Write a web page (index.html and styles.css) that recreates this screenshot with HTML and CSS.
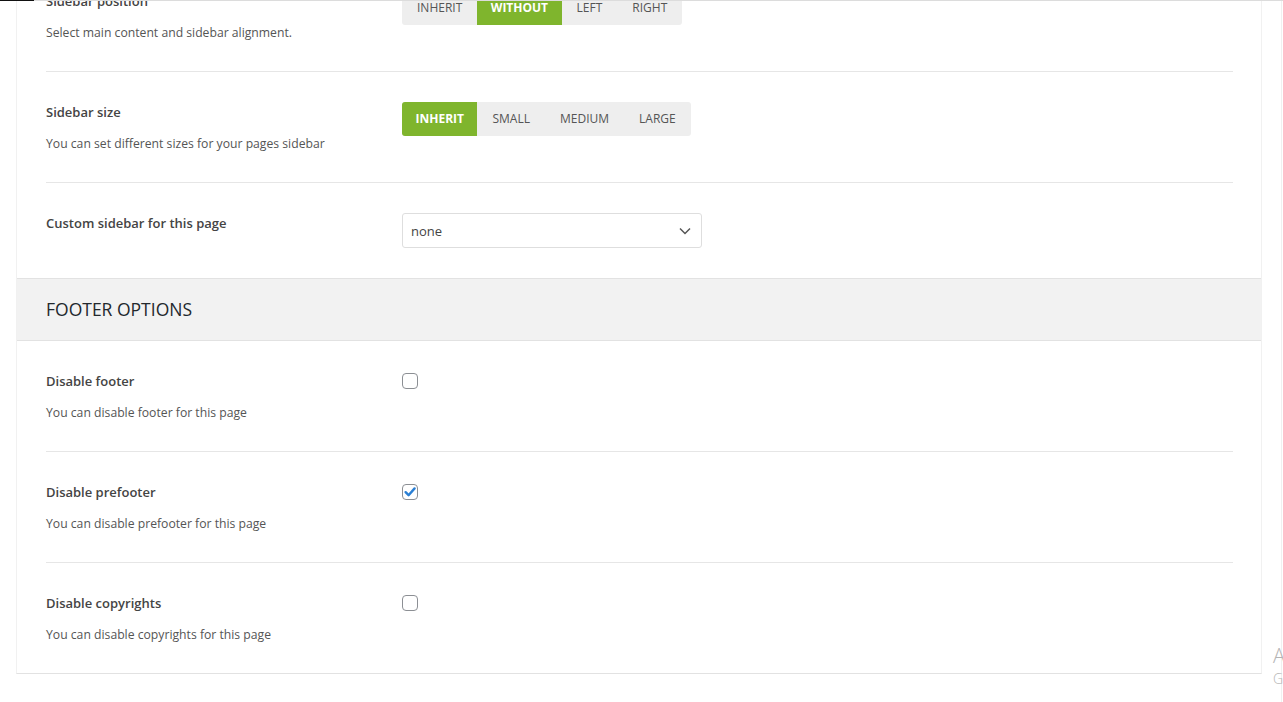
FILE: index.html
```html
<!DOCTYPE html>
<html lang="en">
<head>
<meta charset="utf-8">
<title>Page options</title>
<link rel="stylesheet" href="styles.css">
</head>
<body>
<div class="topbar"><span class="topbar-dark"></span></div>
<div class="page">
  <div class="panel">
    <div class="row first">
      <div class="label">
        <div class="title">Sidebar position</div>
        <div class="desc">Select main content and sidebar alignment.</div>
      </div>
      <div class="control">
        <div class="btn-group">
          <span class="seg">INHERIT</span>
          <span class="seg active">WITHOUT</span>
          <span class="seg">LEFT</span>
          <span class="seg">RIGHT</span>
        </div>
      </div>
    </div>
    <div class="row">
      <div class="label">
        <div class="title">Sidebar size</div>
        <div class="desc">You can set different sizes for your pages sidebar</div>
      </div>
      <div class="control">
        <div class="btn-group">
          <span class="seg active">INHERIT</span>
          <span class="seg">SMALL</span>
          <span class="seg">MEDIUM</span>
          <span class="seg">LARGE</span>
        </div>
      </div>
    </div>
    <div class="row no-border short">
      <div class="label">
        <div class="title">Custom sidebar for this page</div>
      </div>
      <div class="control">
        <div class="select">
          <span>none</span>
          <svg class="chev" width="12" height="8" viewBox="0 0 12 8"><path d="M1 1.5 L6 6.5 L11 1.5" fill="none" stroke="#555" stroke-width="1.5"/></svg>
        </div>
      </div>
    </div>
    <div class="section-head">FOOTER OPTIONS</div>
    <div class="row">
      <div class="label">
        <div class="title">Disable footer</div>
        <div class="desc">You can disable footer for this page</div>
      </div>
      <div class="control"><span class="checkbox"></span></div>
    </div>
    <div class="row">
      <div class="label">
        <div class="title">Disable prefooter</div>
        <div class="desc">You can disable prefooter for this page</div>
      </div>
      <div class="control"><span class="checkbox"><svg width="14" height="14" viewBox="0 0 14 14"><path d="M2.6 7.2 L5.6 10.2 L11.6 3.4" fill="none" stroke="#2a7fd4" stroke-width="2.4" stroke-linecap="round" stroke-linejoin="round"/></svg></span></div>
    </div>
    <div class="row no-border last">
      <div class="label">
        <div class="title">Disable copyrights</div>
        <div class="desc">You can disable copyrights for this page</div>
      </div>
      <div class="control"><span class="checkbox"></span></div>
    </div>
  </div>
  <div class="gutter"></div>
</div>
<div class="watermark">
  <div class="wm-big">Activate Windows</div>
  <div class="wm-small">Go to Settings to activate Windows.</div>
</div>
</body>
</html>
```
FILE: styles.css
```css
html, body {
  margin: 0;
  padding: 0;
  background: #fff;
  overflow: hidden;
  height: 702px;
}
body {
  font-family: "Open Sans", "Noto Sans", sans-serif;
  color: #333;
}
.topbar {
  position: fixed;
  top: 0;
  left: 0;
  right: 0;
  height: 1px;
  background: #dcdcdc;
  z-index: 5;
  display: flex;
}
.topbar-dark {
  width: 34px;
  height: 1px;
  background: #111;
}
.page {
  display: flex;
  align-items: flex-start;
  height: 702px;
}
.panel {
  box-sizing: border-box;
  width: 1246px;
  margin-left: 16px;
  margin-top: -39px;
  border-left: 1px solid #f1f1f1;
  border-right: 1px solid #f1f1f1;
  border-bottom: 1px solid #e2e2e2;
  background: #fff;
}
.gutter {
  width: 19px;
  height: 702px;
  border-right: 1px solid #f0f0f0;
}
.row {
  display: grid;
  grid-template-columns: 356px 1fr;
  margin: 0 28px 0 29px;
  padding: 30px 0 28px;
  border-bottom: 1px solid #e6e6e6;
}
.row.no-border {
  border-bottom: none;
  padding-bottom: 29px;
}
.row.short {
  padding-bottom: 30px;
}
.row.last {
  padding-bottom: 28px;
}
.title {
  font-size: 13px;
  line-height: 20px;
  font-weight: 600;
  color: #444;
}
.desc {
  margin-top: 12px;
  font-size: 12.2px;
  line-height: 20px;
  color: #555;
}
.control {
  display: flex;
  align-items: flex-start;
}
.btn-group {
  display: inline-flex;
  background: #eeeeee;
  border-radius: 3px;
  height: 34px;
  overflow: hidden;
}
.seg {
  padding: 0 15px;
  line-height: 34px;
  font-size: 12px;
  color: #555;
  font-weight: 500;
}
.seg.active {
  padding: 0 13.5px;
  background: #7fb52d;
  color: #fff;
  font-weight: 700;
}
.select {
  box-sizing: border-box;
  width: 300px;
  height: 35px;
  border: 1px solid #dedede;
  border-radius: 3px;
  display: flex;
  align-items: center;
  justify-content: space-between;
  padding: 0 10px 0 8px;
  font-size: 13px;
  color: #444;
  background: #fff;
}
.chev {
  display: block;
}
.section-head {
  height: 61px;
  line-height: 61px;
  background: #f2f2f2;
  border-top: 1px solid #e2e2e2;
  border-bottom: 1px solid #e2e2e2;
  padding-left: 29px;
  font-size: 17.5px;
  color: #23282d;
}
.checkbox {
  box-sizing: border-box;
  width: 16px;
  height: 16px;
  margin-top: 2px;
  border: 1px solid #8c8f94;
  border-radius: 4px;
  background: #fff;
  display: flex;
  align-items: center;
  justify-content: center;
}
.checkbox svg {
  display: block;
}
.watermark {
  position: absolute;
  left: 1273px;
  top: 643px;
  white-space: nowrap;
  color: #b4b4b4;
  font-family: "Open Sans", "Noto Sans", sans-serif;
  font-weight: 300;
}
.wm-big {
  font-size: 20px;
  line-height: 26px;
}
.wm-small {
  font-size: 14px;
  line-height: 20px;
}
```
